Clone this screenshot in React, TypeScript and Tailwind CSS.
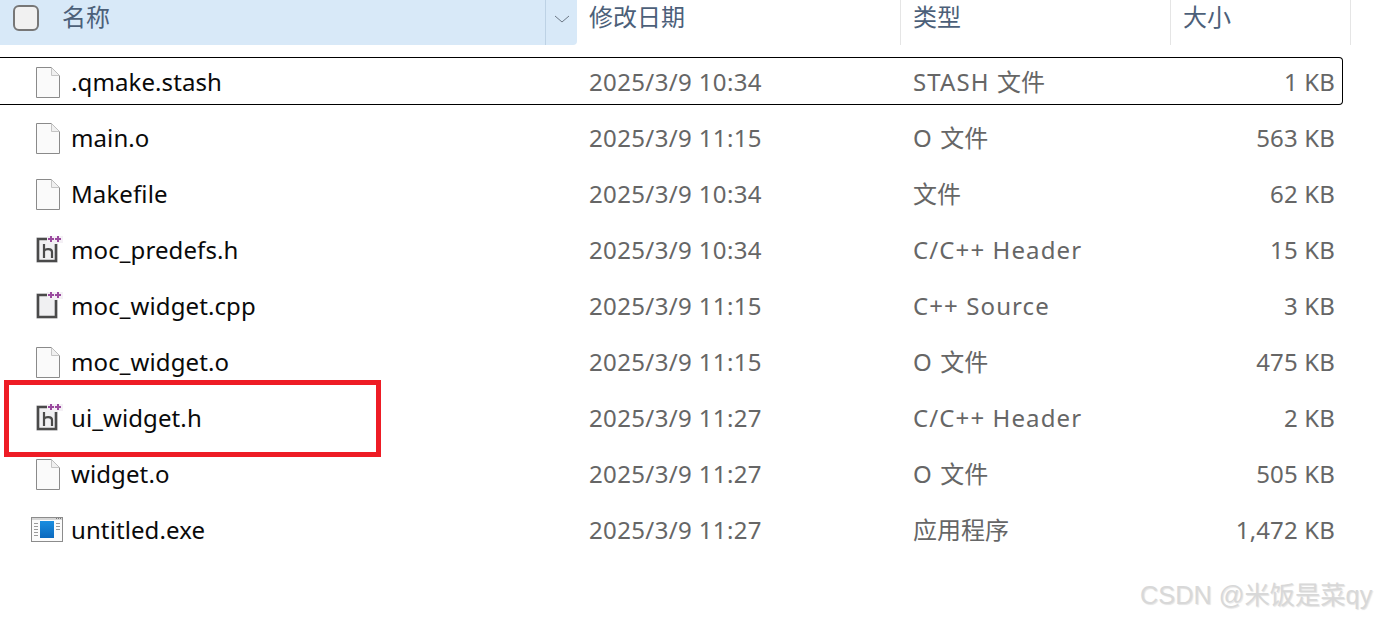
import React from 'react';

type FileKind = 'plain' | 'header' | 'source' | 'exe';

interface FileRow {
  name: string;
  date: string;
  type: string;
  size: string;
  kind: FileKind;
}

const rows: FileRow[] = [
  { name: '.qmake.stash', date: '2025/3/9 10:34', type: 'STASH 文件', size: '1 KB', kind: 'plain' },
  { name: 'main.o', date: '2025/3/9 11:15', type: 'O 文件', size: '563 KB', kind: 'plain' },
  { name: 'Makefile', date: '2025/3/9 10:34', type: '文件', size: '62 KB', kind: 'plain' },
  { name: 'moc_predefs.h', date: '2025/3/9 10:34', type: 'C/C++ Header', size: '15 KB', kind: 'header' },
  { name: 'moc_widget.cpp', date: '2025/3/9 11:15', type: 'C++ Source', size: '3 KB', kind: 'source' },
  { name: 'moc_widget.o', date: '2025/3/9 11:15', type: 'O 文件', size: '475 KB', kind: 'plain' },
  { name: 'ui_widget.h', date: '2025/3/9 11:27', type: 'C/C++ Header', size: '2 KB', kind: 'header' },
  { name: 'widget.o', date: '2025/3/9 11:27', type: 'O 文件', size: '505 KB', kind: 'plain' },
  { name: 'untitled.exe', date: '2025/3/9 11:27', type: '应用程序', size: '1,472 KB', kind: 'exe' },
];

const PlainIcon = () => (
  <svg width="24" height="31" viewBox="0 0 24 31" fill="none">
    <path d="M0.5 0.5H15.5L23.5 8.5V30.5H0.5Z" fill="#fafafa" stroke="#8a8a8a" />
    <path d="M15.5 0.5V8.5H23.5" fill="#f0f0f0" stroke="#c4c4c4" />
  </svg>
);

const Plus = ({ x }: { x: number }) => (
  <path d={`M${x} 0V6M${x - 3} 3H${x + 3}`} stroke="#9a4a9e" strokeWidth="2" />
);

const CodeIcon = ({ letter }: { letter: boolean }) => (
  <svg width="27" height="27" viewBox="0 0 27 27" fill="none">
    <rect x="0" y="1" width="22" height="26" fill="#f0f0f2" />
    <rect x="11" y="0" width="16" height="7" fill="#f4f0f5" />
    <path d="M11 3H2V25H20V8" stroke="#4a4a4a" strokeWidth="2.6" />
    {letter && <path d="M8 8V22M8 15C9 12.5 16 12 16 16V22" stroke="#4a4a4a" strokeWidth="2.2" />}
    <Plus x={15} />
    <Plus x={22} />
  </svg>
);

const ExeIcon = () => (
  <svg width="32" height="25" viewBox="0 0 32 25" fill="none">
    <defs>
      <linearGradient id="exe-blue" x1="0" y1="0" x2="0" y2="1">
        <stop offset="0" stopColor="#1a8ee0" />
        <stop offset="1" stopColor="#0a68bd" />
      </linearGradient>
    </defs>
    <rect x="0.5" y="0.5" width="31" height="24" fill="#fbfbfb" stroke="#8c8c8c" />
    <path d="M1 1H31V3H1Z" fill="#d6d6d6" />
    <path d="M25 1.5H26M27 1.5H28M29 1.5H30" stroke="#777777" />
    <rect x="9" y="4" width="14" height="17" fill="url(#exe-blue)" />
    <path d="M3 6.5H7M3 9.5H7M3 12.5H7M3 15.5H7M3 18.5H7M25 6.5H29M25 9.5H29M25 12.5H29" stroke="#9a9a9a" />
  </svg>
);

const FileIcon = ({ kind }: { kind: FileKind }) => {
  if (kind === 'plain') return <div className="pl-[5px] pt-[2px]"><PlainIcon /></div>;
  if (kind === 'exe') return <div className="pt-[1px]"><ExeIcon /></div>;
  return <div className="pl-[5px]"><CodeIcon letter={kind === 'header'} /></div>;
};

// latin parts of the type column run wider than the CJK parts
const TypeLabel = ({ text }: { text: string }) => (
  <>
    {text.split(/([\u4e00-\u9fff]+)/).map((part, i) =>
      i % 2 === 0 ? (
        <span key={i} className="tracking-[1.1px]">{part}</span>
      ) : (
        <span key={i}>{part}</span>
      ),
    )}
  </>
);

export default function App() {
  return (
    <div className="relative h-[618px] w-[1377px] overflow-hidden bg-white font-['Noto_Sans','Noto_Sans_CJK_SC',sans-serif] text-[24px]">
      {/* Column headers */}
      <div className="flex h-[45px] w-[1351px] text-[#4c6079]">
        <div className="flex w-[577px] rounded-br-sm bg-[#d8e9f8]">
          <div className="ml-[13px] mt-[5px] h-[26px] w-[26px] rounded-md border-2 border-[#777777] bg-[#f1f1f1]" />
          <span className="ml-[24px] w-[482px] -translate-x-px leading-[34px]">名称</span>
          <div className="flex w-[32px] justify-center border-l border-[#bdd2e5] pt-[15px]">
            <svg width="16" height="8" viewBox="0 0 16 8" fill="none">
              <path d="M1 1L8 7L15 1" stroke="#6b7785" />
            </svg>
          </div>
        </div>
        <div className="w-[324px] border-r border-[#e5e5e5] pl-[12px] leading-[34px]">修改日期</div>
        <div className="w-[270px] border-r border-[#e5e5e5] pl-[12px] leading-[34px]">类型</div>
        <div className="w-[180px] border-r border-[#e5e5e5] pl-[12px] leading-[34px]">大小</div>
      </div>

      {/* File rows */}
      <div className="mt-[12px] flex w-[1343px] flex-col gap-[8px]">
        {rows.map((row, i) => (
          <div
            key={row.name}
            className={`grid h-[48px] grid-cols-[577px_324px_270px_172px] items-center text-[#666666] ${
              i === 0 ? 'rounded-r-sm border-y border-r border-black' : ''
            }`}
          >
            <div className="flex items-center pl-[31px] text-[#0a0a0a]">
              <div className="w-[40px]">
                <FileIcon kind={row.kind} />
              </div>
              <span className="pt-[2px] tracking-[0.1px]">{row.name}</span>
            </div>
            <div className="pl-[12px] pt-[2px] tracking-[0.36px]">{row.date}</div>
            <div className="pl-[12px] pt-[2px]"><TypeLabel text={row.type} /></div>
            <div className="pr-[8px] pt-[2px] text-right tracking-[0.15px]">{row.size}</div>
          </div>
        ))}
      </div>

      {/* Red annotation around ui_widget.h */}
      <div className="absolute left-[4px] top-[380px] h-[77px] w-[377px] border-[5px] border-[#ee1c25]" />

      {/* Watermark */}
      <div className="absolute left-[1140px] top-[578px] whitespace-nowrap font-['Liberation_Sans','Noto_Sans_CJK_SC',sans-serif] text-[25.3px] leading-[34px] text-[#d8d8d8] [text-shadow:1px_1px_1px_#e4e4e4]">
        CSDN @米饭是菜qy
      </div>
    </div>
  );
}
